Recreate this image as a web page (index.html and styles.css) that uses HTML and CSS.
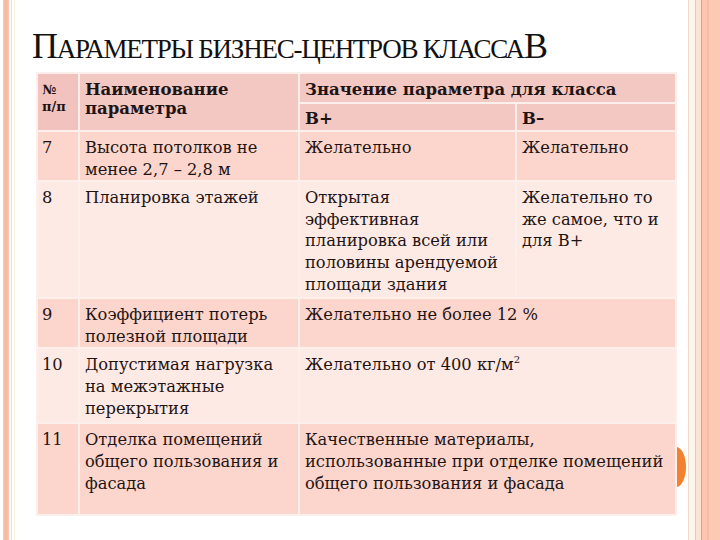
FILE: index.html
```html
<!DOCTYPE html>
<html lang="ru">
<head>
<meta charset="utf-8">
<title>Параметры бизнес-центров класса В</title>
<link rel="stylesheet" href="styles.css">
</head>
<body>
<div class="slide">
  <div class="deco-left">
    <span class="s-w1"></span><span class="s-salmon"></span><span class="s-w2"></span><span class="s-lav"></span><span class="s-w3"></span><span class="s-cream"></span>
  </div>
  <main class="content">
    <h1 class="title"><span class="cap">П</span><span class="sc">араметры бизнес-центров класса</span><span class="cap">В</span></h1>
    <div class="table-wrap">
      <table class="params">
        <colgroup>
          <col class="c1"><col class="c2"><col class="c3"><col class="c4">
        </colgroup>
        <thead>
          <tr class="h1r">
            <th rowspan="2" class="num">№<br>п/п</th>
            <th rowspan="2">Наименование<br>параметра</th>
            <th colspan="2">Значение параметра для класса</th>
          </tr>
          <tr class="h2r">
            <th class="cls">В+</th>
            <th class="cls">В–</th>
          </tr>
        </thead>
        <tbody>
          <tr class="dark r7">
            <td>7</td>
            <td>Высота потолков не<br>менее 2,7 – 2,8 м</td>
            <td>Желательно</td>
            <td>Желательно</td>
          </tr>
          <tr class="light r8">
            <td>8</td>
            <td>Планировка этажей</td>
            <td>Открытая<br>эффективная<br>планировка всей или<br>половины арендуемой<br>площади здания</td>
            <td>Желательно то<br>же самое, что и<br>для В+</td>
          </tr>
          <tr class="dark r9">
            <td>9</td>
            <td>Коэффициент потерь<br>полезной площади</td>
            <td colspan="2">Желательно не более 12 %</td>
          </tr>
          <tr class="light r10">
            <td>10</td>
            <td>Допустимая нагрузка<br>на межэтажные<br>перекрытия</td>
            <td colspan="2">Желательно от 400 кг/м<sup>2</sup></td>
          </tr>
          <tr class="dark r11">
            <td>11</td>
            <td>Отделка помещений<br>общего пользования и<br>фасада</td>
            <td colspan="2">Качественные материалы,<br>использованные при отделке помещений<br>общего пользования и фасада</td>
          </tr>
        </tbody>
      </table>
      <span class="bullet"></span>
    </div>
  </main>
  <div class="deco-right">
    <span class="r-tan1"></span><span class="r-cream"></span><span class="r-tan2"></span><span class="r-light"></span><span class="r-orange"></span><span class="r-salmon"></span><span class="r-salmon2"></span><span class="r-salmon3"></span>
  </div>
</div>
</body>
</html>
```

FILE: styles.css
```css
html, body {
  margin: 0;
  padding: 0;
  background: #ffffff;
}
.slide {
  width: 720px;
  height: 540px;
  display: flex;
  overflow: hidden;
  background: #ffffff;
}
.deco-left, .deco-right {
  display: flex;
  height: 100%;
}
.deco-left span, .deco-right span {
  display: block;
  height: 100%;
}
.s-w1 { width: 3px; background: #fff; }
.s-salmon { width: 6px; background: linear-gradient(to right, #fcc9b4, #f9b59b, #fcc9b4); }
.s-w2 { width: 2px; background: #fff; }
.s-lav { width: 1px; background: #f1dde4; }
.s-w3 { width: 2px; background: #fff; }
.s-cream { width: 1px; background: #f6efda; }

.content {
  flex: 1;
  position: relative;
}
.title {
  margin: 30px 0 0 17px;
  height: 42px;
  font-family: "Liberation Serif", "Times New Roman", serif;
  font-weight: normal;
  color: #111;
  line-height: 32px;
  white-space: nowrap;
  letter-spacing: -1.25px;
}
.title .cap { font-size: 36px; }
.title .sc { font-size: 27px; text-transform: uppercase; }

.table-wrap {
  position: relative;
  margin-left: 21px;
  width: 639px;
}
.params {
  border-collapse: collapse;
  table-layout: fixed;
  width: 639px;
  font-family: "DejaVu Serif", "Liberation Serif", serif;
  font-size: 16.3px;
  color: #1f1414;
  position: relative;
  z-index: 1;
}
col.c1 { width: 42px; }
col.c2 { width: 220px; }
col.c3 { width: 217px; }
col.c4 { width: 160px; }
.params th, .params td {
  border: 2px solid #fdf0ec;
  text-align: left;
  vertical-align: top;
  padding: 5px 2px 0 5px;
  white-space: nowrap;
}
.params th {
  background: #f3c8c3;
  font-weight: bold;
  font-size: 16.5px;
  line-height: 19px;
  padding-top: 6px;
}
.params th.cls { padding-top: 7px; line-height: 16px; }
.params th.num { background: #f2c2be; font-size: 13px; line-height: 17px; padding-left: 4px; padding-top: 7px; }
.params td { line-height: 21.6px; }
.params td:first-child { padding-left: 4px; }
.h1r { height: 30px; }
.h2r { height: 28px; }
.r7 { height: 50px; }
.r8 { height: 117px; }
.r9 { height: 48px; }
.r10 { height: 75px; }
.r11 { height: 92px; }
.dark td { background: #fcd6cc; }
.light td { background: #fdeae4; }
.params sup { font-size: 10px; line-height: 0; vertical-align: 7px; }

.bullet {
  position: absolute;
  left: 630px;
  top: 375px;
  width: 20px;
  height: 40px;
  border-radius: 50%;
  background: #f2822f;
  z-index: 0;
}

.r-tan1 { width: 1px; background: #eddccd; }
.r-cream { width: 6px; background: #fdf4ea; }
.r-tan2 { width: 1px; background: #e8cbb6; }
.r-light { width: 5px; background: #fde3d6; }
.r-orange { width: 1px; background: #ee9a74; }
.r-salmon { width: 5px; background: #fcc7b0; }
.r-salmon2 { width: 2px; background: #f9bba2; }
.r-salmon3 { width: 11px; background: #fdc9b3; }
```
